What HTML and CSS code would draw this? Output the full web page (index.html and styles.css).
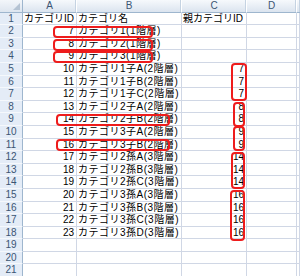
FILE: index.html
```html
<!DOCTYPE html>
<html lang="ja">
<head>
<meta charset="utf-8">
<link rel="stylesheet" href="styles.css">
</head>
<body>
<div class="sheet">
  <div class="corner"><span class="tri"></span></div><div class="ch">A</div><div class="ch">B</div><div class="ch">C</div><div class="ch">D</div><div class="ch edge"></div>

  <div class="rh">1</div><div class="c">カテゴリID</div><div class="c">カテゴリ名</div><div class="c">親カテゴリID</div><div class="c"></div><div class="c"></div>
  <div class="rh">2</div><div class="c n">7</div><div class="c t">カテゴリ1(1階層)</div><div class="c"></div><div class="c"></div><div class="c"></div>
  <div class="rh">3</div><div class="c n">8</div><div class="c t">カテゴリ2(1階層)</div><div class="c"></div><div class="c"></div><div class="c"></div>
  <div class="rh">4</div><div class="c n">9</div><div class="c t">カテゴリ3(1階層)</div><div class="c"></div><div class="c"></div><div class="c"></div>
  <div class="rh">5</div><div class="c n">10</div><div class="c t">カテゴリ1子A(2階層)</div><div class="c n">7</div><div class="c"></div><div class="c"></div>
  <div class="rh">6</div><div class="c n">11</div><div class="c t">カテゴリ1子B(2階層)</div><div class="c n">7</div><div class="c"></div><div class="c"></div>
  <div class="rh">7</div><div class="c n">12</div><div class="c t">カテゴリ1子C(2階層)</div><div class="c n">7</div><div class="c"></div><div class="c"></div>
  <div class="rh">8</div><div class="c n">13</div><div class="c t">カテゴリ2子A(2階層)</div><div class="c n">8</div><div class="c"></div><div class="c"></div>
  <div class="rh">9</div><div class="c n">14</div><div class="c t">カテゴリ2子B(2階層)</div><div class="c n">8</div><div class="c"></div><div class="c"></div>
  <div class="rh">10</div><div class="c n">15</div><div class="c t">カテゴリ3子A(2階層)</div><div class="c n">9</div><div class="c"></div><div class="c"></div>
  <div class="rh">11</div><div class="c n">16</div><div class="c t">カテゴリ3子B(2階層)</div><div class="c n">9</div><div class="c"></div><div class="c"></div>
  <div class="rh">12</div><div class="c n">17</div><div class="c t">カテゴリ2孫A(3階層)</div><div class="c n">14</div><div class="c"></div><div class="c"></div>
  <div class="rh">13</div><div class="c n">18</div><div class="c t">カテゴリ2孫B(3階層)</div><div class="c n">14</div><div class="c"></div><div class="c"></div>
  <div class="rh">14</div><div class="c n">19</div><div class="c t">カテゴリ2孫C(3階層)</div><div class="c n">14</div><div class="c"></div><div class="c"></div>
  <div class="rh">15</div><div class="c n">20</div><div class="c t">カテゴリ3孫A(3階層)</div><div class="c n">16</div><div class="c"></div><div class="c"></div>
  <div class="rh">16</div><div class="c n">21</div><div class="c t">カテゴリ3孫B(3階層)</div><div class="c n">16</div><div class="c"></div><div class="c"></div>
  <div class="rh">17</div><div class="c n">22</div><div class="c t">カテゴリ3孫C(3階層)</div><div class="c n">16</div><div class="c"></div><div class="c"></div>
  <div class="rh">18</div><div class="c n">23</div><div class="c t">カテゴリ3孫D(3階層)</div><div class="c n">16</div><div class="c"></div><div class="c"></div>
  <div class="rh">19</div><div class="c"></div><div class="c"></div><div class="c"></div><div class="c"></div><div class="c"></div>
  <div class="rh">20</div><div class="c"></div><div class="c"></div><div class="c"></div><div class="c"></div><div class="c"></div>
  <div class="rh">21</div><div class="c"></div><div class="c"></div><div class="c"></div><div class="c"></div><div class="c"></div>

  <div class="mark m-r2"></div>
  <div class="mark m-r3"></div>
  <div class="mark m-r4"></div>
  <div class="mark m-r9"></div>
  <div class="mark m-r11"></div>
  <div class="mark m-c5"></div>
  <div class="mark m-c8"></div>
  <div class="mark m-c10"></div>
  <div class="mark m-c12"></div>
  <div class="mark m-c15"></div>
</div>
</body>
</html>
```

FILE: styles.css
```css
html, body {
  margin: 0;
  padding: 0;
  background: #ffffff;
  overflow: hidden;
}

.sheet {
  position: relative;
  display: grid;
  grid-template-columns: 23px 54px 105px 65px 50px 3px;
  grid-auto-rows: 12.6px;
  width: 300px;
  font-family: "Liberation Sans", "Noto Sans CJK JP", sans-serif;
  font-size: 10px;
  color: #000;
}

.sheet > div {
  box-sizing: border-box;
}

.corner {
  position: relative;
  background: linear-gradient(#f3f6fa, #dde5ef);
  border-right: 1px solid #9eb6ce;
  border-bottom: 1px solid #9eb6ce;
}

.tri {
  position: absolute;
  right: 2px;
  bottom: 2px;
  width: 0;
  height: 0;
  border-left: 7px solid transparent;
  border-bottom: 7px solid #b5c3d3;
}

.ch {
  background: linear-gradient(#f6f9fc, #dbe4ef);
  border-right: 1px solid #ffffff;
  border-bottom: 1px solid #9eb6ce;
  box-shadow: inset -1px 0 0 #c5d3e2;
  color: #3b5574;
  text-align: center;
  line-height: 11.6px;
}

.ch.edge {
  border-right: 0;
}

.rh {
  background: #e4ecf7;
  border-right: 1px solid #9eb6ce;
  border-bottom: 1px solid #f5f8fc;
  color: #3b5574;
  text-align: center;
  line-height: 11.6px;
}

.c {
  border-right: 1px solid #d0d7e5;
  border-bottom: 1px solid #d0d7e5;
  white-space: nowrap;
  line-height: 11.6px;
  padding: 0 1px;
  overflow: visible;
}

.c.t {
  letter-spacing: 0.5px;
}

.c.n {
  text-align: right;
  padding-right: 2px;
}

.mark {
  position: absolute;
  box-sizing: border-box;
  border: 2px solid #ee1c1c;
  border-radius: 4px;
}

.m-r2 { left: 53px; top: 26px; width: 100px; height: 12px; }
.m-r3 { left: 53px; top: 39px; width: 100px; height: 12px; }
.m-r4 { left: 53px; top: 51px; width: 100px; height: 12px; }
.m-r9 { left: 56px; top: 114px; width: 114px; height: 12px; }
.m-r11 { left: 56px; top: 139px; width: 114px; height: 12px; }

.m-c5 { left: 231px; top: 63px; width: 16px; height: 38px; }
.m-c8 { left: 233px; top: 102px; width: 12px; height: 25px; }
.m-c10 { left: 233px; top: 126px; width: 12px; height: 25px; }
.m-c12 { left: 231px; top: 152px; width: 14px; height: 37px; }
.m-c15 { left: 230px; top: 190px; width: 15px; height: 51px; }
```
